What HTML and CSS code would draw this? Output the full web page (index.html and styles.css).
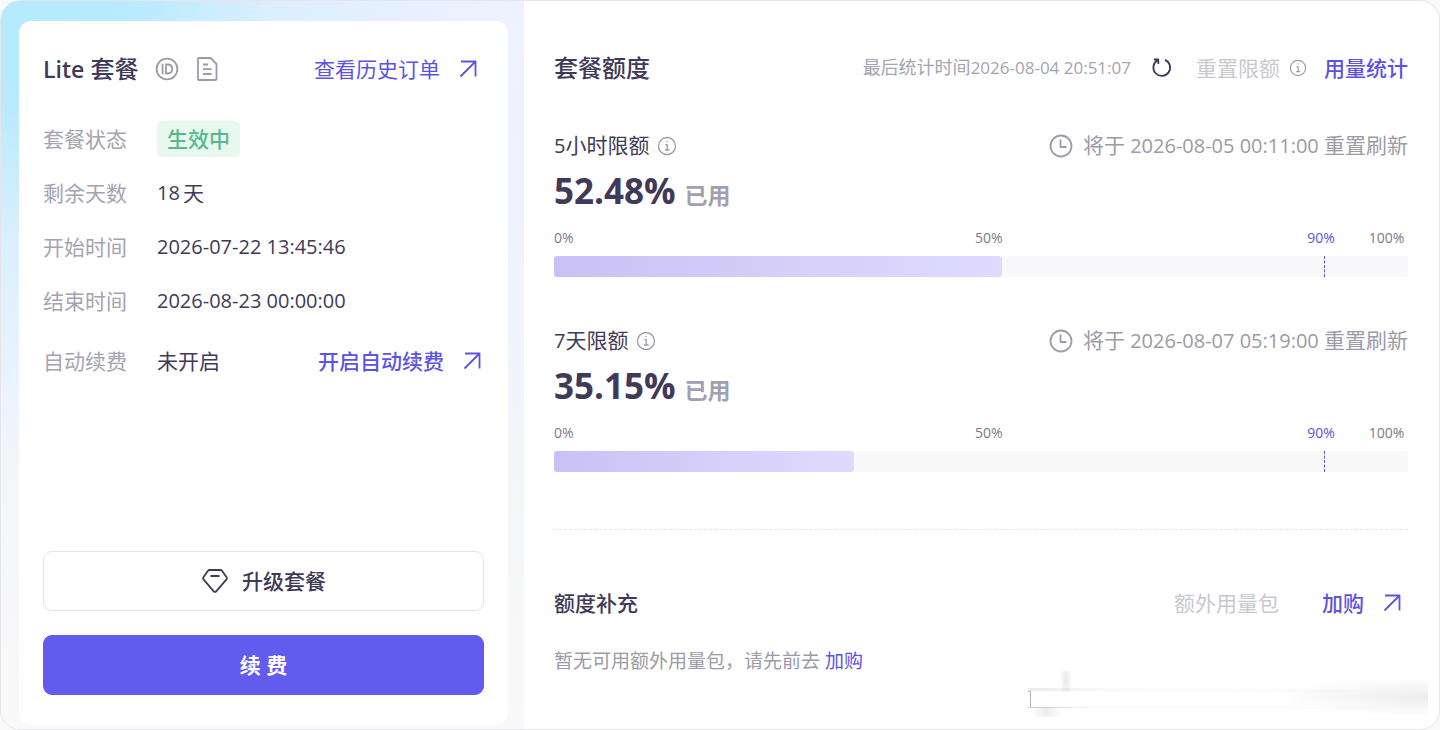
FILE: index.html
```html
<!DOCTYPE html>
<html lang="zh-CN">

<head>
    <title>套餐概览</title>
    <meta charset="UTF-8">
    <meta name="viewport" content="width=device-width, initial-scale=1.0">
    <link rel="stylesheet" href="styles.css">
</head>

<body>
    <div class="panel">
        <div class="side">
            <div class="card">
                <div class="card-head">
                    <h2><span class="plan">Lite</span> 套餐</h2>
                    <button type="button" class="icon-btn" aria-label="ID">
                        <svg width="24" height="24" viewBox="0 0 24 24">
                            <circle cx="12" cy="12" r="10.4" />
                            <path d="M7.6 6.8v10.400M11 7.500v9h1.600c2.900 0 4.600-1.700 4.600-4.500s-1.700-4.500-4.600-4.500z" />
                        </svg>
                    </button>
                    <button type="button" class="icon-btn" aria-label="订单">
                        <svg width="24" height="24" viewBox="0 0 24 24">
                            <path d="M4 1h11.500l6 6v15a1 1 0 0 1-1 1H4a1 1 0 0 1-1-1V2a1 1 0 0 1 1-1zM8 7.500h5M8 12.200h8.500M8 17h8.500" />
                        </svg>
                    </button>
                    <a href="#" class="link push">查看历史订单
                        <svg width="24" height="24" viewBox="0 0 24 24">
                            <path d="M5 4.500h14.500v15M19.500 4.500L4.500 19.500" />
                        </svg>
                    </a>
                </div>
                <dl class="info">
                    <div class="row">
                        <dt>套餐状态</dt>
                        <dd><span class="tag">生效中</span></dd>
                    </div>
                    <div class="row">
                        <dt>剩余天数</dt>
                        <dd class="days"><span class="num">18</span>天</dd>
                    </div>
                    <div class="row">
                        <dt>开始时间</dt>
                        <dd class="num">2026-07-22 13:45:46</dd>
                    </div>
                    <div class="row">
                        <dt>结束时间</dt>
                        <dd class="num">2026-08-23 00:00:00</dd>
                    </div>
                    <div class="row tall">
                        <dt>自动续费</dt>
                        <dd>未开启</dd>
                        <dd class="push">
                            <a href="#" class="link strong">开启自动续费
                                <svg width="24" height="24" viewBox="0 0 24 24">
                                    <path d="M5 4.500h14.500v15M19.500 4.500L4.500 19.500" />
                                </svg>
                            </a>
                        </dd>
                    </div>
                </dl>
                <div class="actions">
                    <button type="button" class="btn">
                        <svg width="28" height="28" viewBox="0 0 28 28">
                            <path d="M8.500 3h11a2 2 0 0 1 1.500.8l4.600 6.400a1.700 1.700 0 0 1-.1 2.200L15.200 24.300a1.600 1.600 0 0 1-2.400 0L2.500 12.400a1.700 1.700 0 0 1-.1-2.200L7 3.800A2 2 0 0 1 8.500 3zM9.500 9h9" />
                        </svg>
                        升级套餐
                    </button>
                    <button type="button" class="btn primary">续 费</button>
                </div>
            </div>
        </div>

        <div class="main">
            <div class="main-head">
                <h2>套餐额度</h2>
                <span class="updated">最后统计时间<span class="num-sm">2026-08-04 20:51:07</span></span>
                <button type="button" class="icon-btn dark" aria-label="刷新">
                    <svg width="22" height="22" viewBox="0 0 22 22">
                        <path d="M14 2.800a8.400 8.400 0 1 1-7.500.5M2.800 2.500h4.500v4.500" />
                    </svg>
                </button>
                <button type="button" class="reset" disabled>重置限额</button>
                <svg class="tip" width="18" height="18" viewBox="0 0 20 20">
                    <circle cx="10" cy="10" r="8.500" />
                    <path d="M8.300 8.700h1.900v5M8 14h4.500M9.500 5.500h1.200" />
                </svg>
                <a href="#" class="link strong">用量统计</a>
            </div>

            <div class="quota">
                <div class="quota-head">
                    <span><span class="num">5</span>小时限额</span>
                    <svg class="tip" width="20" height="20" viewBox="0 0 20 20">
                        <circle cx="10" cy="10" r="8.500" />
                        <path d="M8.300 8.700h1.900v5M8 14h4.500M9.500 5.500h1.200" />
                    </svg>
                    <span class="refresh push">
                        <svg width="24" height="24" viewBox="0 0 24 24">
                            <circle cx="12" cy="12" r="10.500" />
                            <path d="M11.500 5.500v7.500h6" />
                        </svg>
                        <span>将于<span class="num"> 2026-08-05 00:11:00 </span>重置刷新</span>
                    </span>
                </div>
                <div class="used"><strong>52.48%</strong><span>已用</span></div>
                <div class="scale">
                    <span>0%</span>
                    <span>50%</span>
                    <span class="warn">90%</span>
                    <span>100%</span>
                </div>
                <div class="bar">
                    <div class="fill" style="width: 52.48%"></div>
                    <div class="mark"></div>
                </div>
            </div>

            <div class="quota">
                <div class="quota-head">
                    <span><span class="num">7</span>天限额</span>
                    <svg class="tip" width="20" height="20" viewBox="0 0 20 20">
                        <circle cx="10" cy="10" r="8.500" />
                        <path d="M8.300 8.700h1.900v5M8 14h4.500M9.500 5.500h1.200" />
                    </svg>
                    <span class="refresh push">
                        <svg width="24" height="24" viewBox="0 0 24 24">
                            <circle cx="12" cy="12" r="10.500" />
                            <path d="M11.500 5.500v7.500h6" />
                        </svg>
                        <span>将于<span class="num"> 2026-08-07 05:19:00 </span>重置刷新</span>
                    </span>
                </div>
                <div class="used"><strong>35.15%</strong><span>已用</span></div>
                <div class="scale">
                    <span>0%</span>
                    <span>50%</span>
                    <span class="warn">90%</span>
                    <span>100%</span>
                </div>
                <div class="bar">
                    <div class="fill" style="width: 35.15%"></div>
                    <div class="mark"></div>
                </div>
            </div>

            <div class="extra">
                <div class="extra-head">
                    <h3>额度补充</h3>
                    <span class="muted">额外用量包</span>
                    <a href="#" class="link strong">加购
                        <svg width="24" height="24" viewBox="0 0 24 24">
                            <path d="M5 4.500h14.500v15M19.500 4.500L4.500 19.500" />
                        </svg>
                    </a>
                </div>
                <p class="empty">暂无可用额外用量包，请先前去 <a href="#">加购</a></p>
            </div>

            <div class="smudge">
                <div class="smudge-box"></div>
            </div>
        </div>
    </div>
</body>

</html>
```
FILE: styles.css
```css
* {
    margin: 0;
    padding: 0;
    box-sizing: border-box;
}

body {
    font-family: "Open Sans", "Noto Sans CJK SC", sans-serif;
    font-size: 21px;
    line-height: 30px;
    color: #3f3a5a;
    background-color: #fafafa;
}

h2 {
    font-size: 24px;
    font-weight: 500;
}

h3 {
    font-size: 21px;
    font-weight: 500;
}

svg {
    flex: none;
    fill: none;
    stroke: currentColor;
    stroke-width: 1.8;
    stroke-linejoin: round;
}

a {
    color: #5c53e5;
    text-decoration: none;
}

button {
    font: inherit;
    color: inherit;
    background: none;
    border: none;
    cursor: pointer;
}

.panel {
    display: flex;
    min-height: 100vh;
    background-color: #fff;
    border: 1px solid #e6e6ea;
    border-radius: 20px;
    overflow: hidden;
}

.plan {
    font-size: 23px;
    font-weight: 600;
}

.num {
    font-size: 20px;
}

.num-sm {
    font-size: 17px;
}

.push {
    margin-left: auto;
}

.link {
    display: flex;
    align-items: center;
    gap: 16px;
}

.strong {
    font-weight: 500;
}

.icon-btn {
    display: flex;
    color: #9c9aa8;
}

.dark {
    color: #3f3a5a;
}

.tip {
    color: #9c9aa8;
    stroke-width: 1.3;
}

/* left column */
.side {
    display: flex;
    flex: 0 0 523px;
    padding: 20px 16px 4px 18px;
    background: radial-gradient(ellipse 460px 440px at 40px 20px, #b5eaff 0%, #b9eaff 20%, rgba(214, 238, 255, 0.8) 50%, rgba(238, 242, 255, 0) 100%), linear-gradient(#eef1ff 0%, #f1f4fc 45%, #f5f6f8 70%, #f9f9f9 100%);
}

.card {
    display: flex;
    flex: 1;
    flex-direction: column;
    padding: 33px 24px 30px;
    background-color: #fff;
    border-radius: 12px;
}

.card-head {
    display: flex;
    align-items: center;
    padding-right: 4px;
    margin-bottom: 37px;
}

.card-head .icon-btn {
    margin-left: 16px;
}

.info {
    display: flex;
    flex-direction: column;
    gap: 18px;
}

.row {
    display: flex;
    align-items: center;
    height: 36px;
}

.tall {
    height: 48px;
}

dt {
    width: 114px;
    color: #a5a3b3;
}

.days {
    display: flex;
    gap: 3px;
}

.tag {
    display: block;
    padding: 3px 10px;
    font-weight: 500;
    color: #54b98a;
    background-color: #e9f8ef;
    border-radius: 5px;
}

.actions {
    display: flex;
    flex-direction: column;
    gap: 24px;
    margin-top: auto;
}

.btn {
    display: flex;
    align-items: center;
    justify-content: center;
    gap: 13px;
    height: 60px;
    font-weight: 500;
    border: 1px solid #e4e4e8;
    border-radius: 9px;
}

.primary {
    font-weight: 700;
    color: #fff;
    background-color: #625bee;
    border-color: #625bee;
}

/* right column */
.main {
    flex: 1;
    padding: 51px 31px 12px 30px;
}

.main-head {
    display: flex;
    align-items: center;
    margin-bottom: 47px;
}

.updated {
    margin-left: auto;
    font-size: 18px;
    color: #a5a3b3;
}

.main-head .icon-btn {
    margin: 0 23px 0 20px;
}

.reset {
    color: #c9c8d1;
    cursor: default;
}

.main-head .tip {
    margin: 0 17px 0 9px;
}

.quota {
    margin-bottom: 48px;
}

.quota-head {
    display: flex;
    align-items: center;
}

.quota-head .tip {
    margin-left: 8px;
}

.refresh {
    display: flex;
    align-items: center;
    gap: 10px;
    color: #9c9aa8;
}

.refresh .num {
    white-space: pre;
}

.used {
    display: flex;
    align-items: baseline;
    gap: 9px;
    height: 66px;
    line-height: 60px;
}

.used strong {
    font-size: 35px;
}

.used span {
    font-size: 23px;
    font-weight: 700;
    color: #a19fb1;
}

.scale {
    display: grid;
    grid-template-columns: 49.3% 38.9% 7.2% auto;
    margin-bottom: 8px;
    font-size: 14px;
    line-height: 21px;
    color: #7c7a89;
}

.scale .warn {
    color: #5c53e5;
}

.bar {
    position: relative;
    height: 21px;
    background-color: #f9f9fc;
    border-radius: 3px;
}

.fill {
    height: 100%;
    background: linear-gradient(90deg, #c9c1f5, #e0dbfe);
    border-radius: 3px;
}

.mark {
    position: absolute;
    top: 0;
    left: 90%;
    height: 100%;
    border-right: 1px dashed #5c53e5;
    width: 2px;
}

.extra {
    padding-top: 58px;
    margin-top: 57px;
    border-top: 1px dashed #e4e4e8;
}

.extra-head {
    display: flex;
    align-items: center;
    padding-right: 4px;
    margin-bottom: 28px;
}

.muted {
    margin: 0 43px 0 auto;
    color: #c9c8d1;
}

.empty {
    font-size: 19px;
    color: #9c9aa8;
}

/* faint streak in the corner */
.smudge {
    width: 400px;
    height: 46px;
    padding: 20px 0 0 2px;
    margin: -5px -20px 0 auto;
    background:
        radial-gradient(ellipse 6px 26px at 38px 8px, rgba(0, 0, 0, 0.09), rgba(0, 0, 0, 0)),
        radial-gradient(ellipse 16px 14px at 18px 40px, rgba(0, 0, 0, 0.08), rgba(0, 0, 0, 0)),
        radial-gradient(ellipse 160px 20px at 400px 26px, rgba(0, 0, 0, 0.07), rgba(0, 0, 0, 0)),
        linear-gradient(90deg, rgba(0, 0, 0, 0.28), rgba(0, 0, 0, 0.06) 60px, rgba(0, 0, 0, 0.02) 260px, rgba(0, 0, 0, 0)) 0 20px / 100% 1px no-repeat,
        linear-gradient(90deg, rgba(0, 0, 0, 0.2), rgba(0, 0, 0, 0.04) 60px, rgba(0, 0, 0, 0.02) 260px, rgba(0, 0, 0, 0)) 0 36px / 100% 1px no-repeat,
        linear-gradient(90deg, rgba(0, 0, 0, 0.08), rgba(0, 0, 0, 0.02) 80px, rgba(0, 0, 0, 0)) 0 17px / 100% 3px no-repeat;
}

.smudge-box {
    width: 300px;
    height: 16px;
    background: linear-gradient(90deg, #fff, rgba(255, 255, 255, 0));
    border-left: 1px solid #b4b4b4;
}
```
